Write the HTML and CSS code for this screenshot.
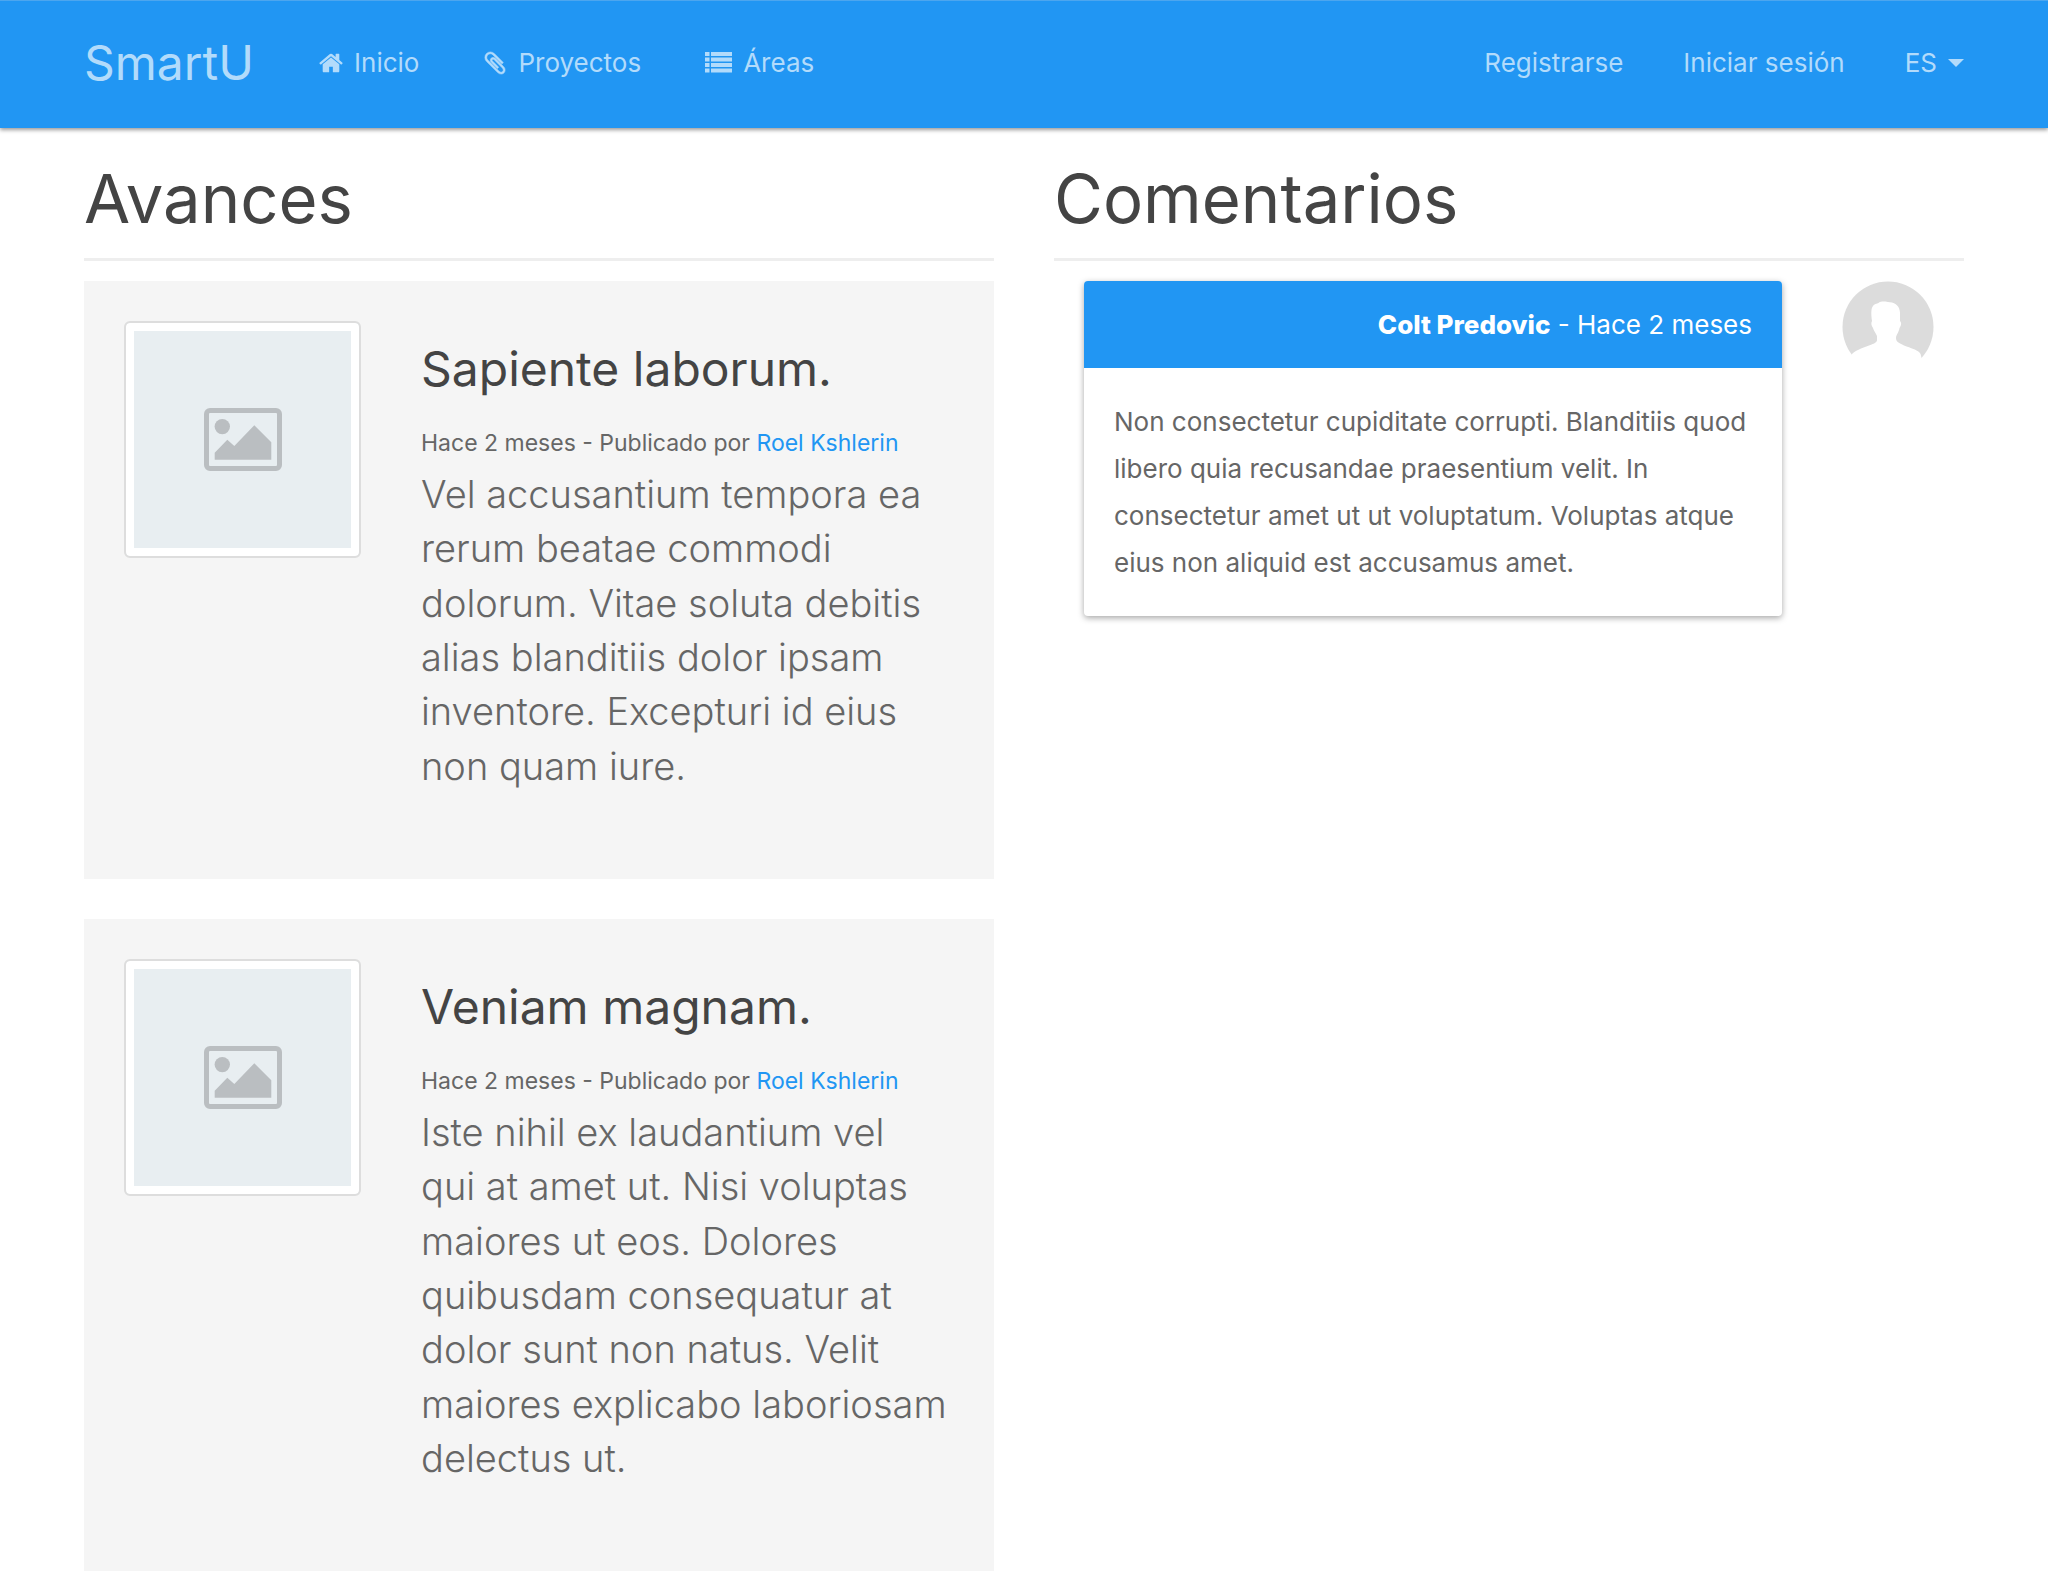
FILE: index.html
```html
<!DOCTYPE html>
<html lang="es">
<head>
<meta charset="utf-8">
<meta name="viewport" content="width=device-width, initial-scale=1">
<title>SmartU</title>
<link rel="stylesheet" href="styles.css">
</head>
<body>
<svg class="sprite" aria-hidden="true">
  <symbol id="picture" viewBox="0 0 78 63">
    <rect x="2.5" y="2.5" width="73" height="58" rx="3.5" fill="none" stroke="currentColor" stroke-width="5"/>
    <circle cx="18.3" cy="18.6" r="7.7" fill="currentColor"/>
    <path d="M10.7 51.7v-7l12.6-13 7 6.3 20-20.7 17 17v17.4z" fill="currentColor"/>
  </symbol>
</svg>
<header class="navbar">
  <a class="brand" href="#">SmartU</a>
  <nav class="menu" aria-label="Principal">
    <a class="menu-link" href="#"><svg class="icon" viewBox="64 0 1664 1792" aria-hidden="true"><path d="M1472 992v480q0 26-19 45t-45 19h-384v-384h-256v384h-384q-26 0-45-19t-19-45v-480q0-1 .5-3t.5-3l575-474 575 474q1 2 1 6zm223-69l-62 74q-8 9-21 11h-3q-13 0-21-7l-692-577-692 577q-12 8-24 7-13-2-21-11l-62-74q-8-10-7-23.5t11-21.5l719-599q32-26 76-26t76 26l244 204v-195q0-14 9-23t23-9h192q14 0 23 9t9 23v408l219 182q10 8 11 21.5t-7 23.5z"/></svg>Inicio</a>
    <a class="menu-link" href="#"><svg class="icon icon-bold" viewBox="64 0 1664 1792" aria-hidden="true"><path d="M1596 1385q0 117-79 196t-196 79q-135 0-235-100l-777-776q-113-115-113-271 0-159 110-270t269-111q158 0 273 113l605 606q10 10 10 22 0 16-30.5 46.5t-46.5 30.5q-13 0-23-10l-606-607q-79-77-181-77-106 0-179 75t-73 181q0 105 76 181l776 777q63 63 145 63 64 0 106-42t42-106q0-82-63-145l-581-581q-26-24-60-24-29 0-48 19t-19 48q0 32 25 59l410 410q10 10 10 22 0 16-31 47t-47 31q-12 0-22-10l-410-410q-63-61-63-149 0-82 57-139t139-57q88 0 149 63l581 581q100 98 100 235z"/></svg>Proyectos</a>
    <a class="menu-link" href="#"><svg class="icon icon-wide" viewBox="0 0 27 26" aria-hidden="true"><path d="M0 2h4.500v4H0zM6 2h21v4H6zM0 7.500h4.500v4H0zM6 7.500h21v4H6zM0 13h4.500v4H0zM6 13h21v4H6zM0 18.500h4.500v4H0zM6 18.500h21v4H6z"/></svg>Áreas</a>
  </nav>
  <nav class="menu account" aria-label="Cuenta">
    <a class="menu-link" href="#">Registrarse</a>
    <a class="menu-link" href="#">Iniciar sesión</a>
    <button class="menu-link language" type="button" aria-haspopup="true">ES<span class="caret"></span></button>
  </nav>
</header>
<main class="columns">
  <section>
    <h1 class="section-title">Avances</h1>
    <article class="update">
      <div class="thumbnail"><svg class="picture" aria-hidden="true"><use href="#picture"/></svg></div>
      <div class="update-body">
        <h2 class="update-title">Sapiente laborum.</h2>
        <p class="meta">Hace 2 meses - Publicado por <a href="#">Roel Kshlerin</a></p>
        <p class="lead">Vel accusantium tempora ea rerum beatae commodi dolorum. Vitae soluta debitis alias blanditiis dolor ipsam inventore. Excepturi id eius non quam iure.</p>
      </div>
    </article>
    <article class="update">
      <div class="thumbnail"><svg class="picture" aria-hidden="true"><use href="#picture"/></svg></div>
      <div class="update-body">
        <h2 class="update-title">Veniam magnam.</h2>
        <p class="meta">Hace 2 meses - Publicado por <a href="#">Roel Kshlerin</a></p>
        <p class="lead">Iste nihil ex laudantium vel qui&nbsp;at amet ut. Nisi voluptas maiores ut eos. Dolores quibusdam consequatur at dolor sunt non natus. Velit maiores explicabo laboriosam delectus ut.</p>
      </div>
    </article>
  </section>
  <section>
    <h1 class="section-title">Comentarios</h1>
    <div class="comment">
      <article class="panel">
        <header class="panel-heading"><strong>Colt Predovic</strong> - Hace 2 meses</header>
        <p class="panel-body">Non consectetur cupiditate corrupti. Blanditiis quod libero quia recusandae praesentium velit. In consectetur amet ut ut voluptatum. Voluptas atque eius non aliquid est accusamus amet.</p>
      </article>
      <svg class="avatar" viewBox="0 0 92 92" role="img" aria-label="Colt Predovic">
        <circle cx="46" cy="46" r="45.500" fill="#dcdcdc"/>
        <path fill="#fff" d="M0 92L9.700 73.500C12 70 20 67 27 64.500C33 62.500 35 61 35 59V55C33 51 31.500 49 31 47C29 44 29 42 30 40C29 33 29 27 31 25C33 22 36 23 37 21.500C40 19.500 46 21 50 21.500C56 23 58 28 58 32V40C60 42 59 45 57.500 47C57 51 54 54 54 57C54 61 57 62 62 64.500C69 67 75 69 77.500 71.500C79 73 79 75 79.500 77L82 92z"/>
      </svg>
    </div>
  </section>
</main>
</body>
</html>
```
FILE: styles.css
```css
* { box-sizing: border-box; }

body {
  margin: 0;
  background: #fff;
  color: #666;
  font-family: Inter, Roboto, sans-serif;
  font-size: 26px;
  line-height: 47px;
}

h1, h2, p { margin: 0; font-weight: 400; }

a { color: #2196f3; text-decoration: none; }

.sprite { display: none; }

.navbar {
  display: flex;
  align-items: center;
  height: 128px;
  padding: 0 84px 4px;
  background: #2196f3;
  border-top: 1px solid #4ca6ef;
  box-shadow: 0 2px 4px rgba(0, 0, 0, .4);
}

.brand {
  margin-right: 65px;
  color: #b2dbfb;
  font-size: 48px;
}

.menu { display: flex; gap: 64px; }

.account { margin-left: auto; gap: 60px; }

.menu-link {
  display: flex;
  align-items: center;
  padding: 0;
  border: 0;
  background: none;
  color: #b2dbfb;
  font: inherit;
}

.icon {
  width: 24px;
  height: 26px;
  margin-right: 11px;
  fill: currentColor;
}

.icon-bold { stroke: currentColor; stroke-width: 40; }

.icon-wide { width: 27px; }

.caret {
  margin-left: 11px;
  border: 8px solid transparent;
  border-top-color: currentColor;
  border-bottom: 0;
}

.columns {
  display: grid;
  grid-template-columns: 1fr 1fr;
  gap: 60px;
  padding: 31px 84px 23px;
}

.section-title {
  margin-bottom: 20px;
  padding-bottom: 19px;
  border-bottom: 3px solid #eee;
  color: #444;
  font-size: 67px;
  line-height: 80px;
}

.update {
  display: flex;
  align-items: flex-start;
  gap: 60px;
  padding: 40px;
  background: #f5f5f5;
}

.update + .update { margin-top: 40px; }

.thumbnail {
  display: grid;
  place-items: center;
  flex: none;
  width: 237px;
  height: 237px;
  border: 2px solid #ddd;
  border-radius: 6px;
  background: #e8eef1;
  box-shadow: inset 0 0 0 8px #fff;
}

.picture { width: 78px; height: 63px; color: #babec1; }

.update-body { flex: 1; padding: 20px 0 46px; }

.update-title {
  margin-bottom: 23px;
  color: #444;
  font-size: 48px;
  line-height: 56px;
}

.meta { font-size: 23px; }

.lead {
  font-size: 38px;
  font-weight: 300;
  line-height: 1.43;
}

.comment {
  display: flex;
  align-items: flex-start;
  gap: 60px;
  padding: 0 30px;
}

.panel {
  flex: 1;
  border-radius: 4px;
  background: #fff;
  box-shadow: 0 2px 6px rgba(0, 0, 0, .35);
  overflow: hidden;
}

.panel-heading {
  padding: 20px 30px;
  background: #2196f3;
  color: #fff;
  text-align: right;
}

.panel-heading strong { font-weight: 800; }

.panel-body { padding: 30px; }

.avatar { flex: none; width: 92px; height: 92px; }
```
